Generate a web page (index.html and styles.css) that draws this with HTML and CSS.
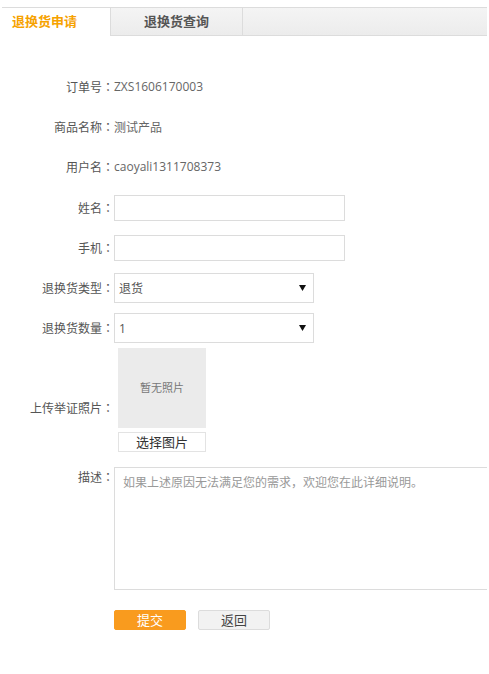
FILE: index.html
```html
<!DOCTYPE html>
<html lang="zh">
<head>
    <meta charset="UTF-8">
    <meta name="viewport" content="width=device-width, initial-scale=1.0">
    <title>退换货申请</title>
    <link rel="stylesheet" href="styles.css">
</head>
<body>
    <div class="page">
        <div class="tabs">
            <div class="tab tab-active">退换货申请</div>
            <div class="tab tab-normal">退换货查询</div>
            <div class="tab-rest"></div>
        </div>

        <div class="form">
            <div class="row row-text">
                <label>订单号<i class="colon">：</i></label>
                <span class="value">ZXS1606170003</span>
            </div>
            <div class="row row-text">
                <label>商品名称<i class="colon">：</i></label>
                <span class="value">测试产品</span>
            </div>
            <div class="row row-text">
                <label>用户名<i class="colon">：</i></label>
                <span class="value">caoyali1311708373</span>
            </div>
            <div class="row">
                <label for="name">姓名<i class="colon">：</i></label>
                <input type="text" id="name" class="text-input">
            </div>
            <div class="row">
                <label for="phone">手机<i class="colon">：</i></label>
                <input type="text" id="phone" class="text-input">
            </div>
            <div class="row">
                <label for="type">退换货类型<i class="colon">：</i></label>
                <div class="select-box">
                    <select id="type">
                        <option>退货</option>
                        <option>换货</option>
                    </select>
                    <svg class="arrow" width="7" height="6" viewBox="0 0 7 6"><path d="M0 0H7L3.5 6Z" fill="#111"/></svg>
                </div>
            </div>
            <div class="row">
                <label for="count">退换货数量<i class="colon">：</i></label>
                <div class="select-box">
                    <select id="count">
                        <option>1</option>
                    </select>
                    <svg class="arrow" width="7" height="6" viewBox="0 0 7 6"><path d="M0 0H7L3.5 6Z" fill="#111"/></svg>
                </div>
            </div>
            <div class="row row-photo">
                <label>上传举证照片<i class="colon">：</i></label>
                <div class="photo">
                    <div class="photo-empty">暂无照片</div>
                    <button class="photo-btn">选择图片</button>
                </div>
            </div>
            <div class="row row-desc">
                <label for="desc">描述<i class="colon">：</i></label>
                <textarea id="desc" placeholder="如果上述原因无法满足您的需求，欢迎您在此详细说明。"></textarea>
            </div>
            <div class="actions">
                <button class="btn btn-submit">提交</button>
                <button class="btn btn-back">返回</button>
            </div>
        </div>
    </div>
</body>
</html>
```

FILE: styles.css
```css
body {
    margin: 0;
    font-family: "Open Sans", "Noto Sans CJK SC", sans-serif;
    font-size: 12px;
    color: #555;
    background: #fff;
}
.page {
    width: 485px;
    margin: 7px 0 0 2px;
    overflow: hidden;
}
.tabs {
    display: flex;
    height: 29px;
}
.tab {
    box-sizing: border-box;
    border-top: 1px solid #dcdcdc;
    line-height: 27px;
    font-size: 13px;
    font-weight: bold;
}
.tab-active {
    width: 108px;
    padding-left: 10px;
    color: #f6a200;
    background: #fff;
}
.tab-normal {
    width: 133px;
    text-align: center;
    color: #555;
    border-left: 1px solid #dcdcdc;
    border-right: 1px solid #dcdcdc;
    border-bottom: 1px solid #dcdcdc;
    background: linear-gradient(#f4f4f4, #ececec);
}
.tab-rest {
    flex: 1;
    box-sizing: border-box;
    border-top: 1px solid #dcdcdc;
    border-bottom: 1px solid #dcdcdc;
    background: linear-gradient(#f4f4f4, #ececec);
}
.form {
    padding-top: 32px;
}
.row {
    display: flex;
    align-items: center;
    height: 40px;
}
.row-text {
    box-sizing: border-box;
    padding-bottom: 3px;
}
.row label {
    width: 112px;
    flex-shrink: 0;
    text-align: right;
    color: #555;
}
.colon {
    display: inline-block;
    width: 12px;
    text-align: center;
    font-style: normal;
    font-family: "Noto Sans CJK TC", sans-serif;
}
.value {
    color: #666;
}
.text-input {
    box-sizing: border-box;
    width: 231px;
    height: 26px;
    border: 1px solid #dcdcdc;
    padding: 0 5px;
    font: inherit;
    outline: none;
}
.select-box {
    box-sizing: border-box;
    display: flex;
    align-items: center;
    width: 200px;
    height: 30px;
    border: 1px solid #dcdcdc;
    padding-right: 7px;
}
.select-box select {
    flex: 1;
    appearance: none;
    -webkit-appearance: none;
    border: none;
    background: transparent;
    outline: none;
    height: 28px;
    padding: 0 4px;
    font-family: inherit;
    font-size: 12px;
    color: #555;
}
.row-photo {
    height: auto;
}
.row-photo label {
    margin-top: 16px;
}
.photo {
    display: flex;
    flex-direction: column;
    margin-left: 4px;
}
.photo-empty {
    width: 88px;
    height: 80px;
    background: #ebebeb;
    color: #777;
    font-size: 11px;
    line-height: 80px;
    text-align: center;
}
.photo-btn {
    box-sizing: border-box;
    width: 88px;
    height: 20px;
    margin-top: 4px;
    padding: 0;
    border: 1px solid #e3e3e3;
    background: #fff;
    font-family: inherit;
    font-size: 13px;
    line-height: 18px;
    color: #333;
}
.row-desc {
    height: auto;
    align-items: flex-start;
    margin-top: 15px;
}
.row-desc label {
    line-height: 20px;
}
.row-desc textarea {
    box-sizing: border-box;
    flex-shrink: 0;
    width: 400px;
    height: 123px;
    border: 1px solid #dcdcdc;
    padding: 5px 8px;
    font-family: "Noto Sans CJK SC", sans-serif;
    font-size: 12px;
    line-height: 18px;
    resize: none;
    outline: none;
}
.row-desc textarea::placeholder {
    color: #999;
}
.actions {
    display: flex;
    gap: 12px;
    margin: 20px 0 0 112px;
}
.btn {
    box-sizing: border-box;
    width: 72px;
    height: 20px;
    padding: 0;
    border-radius: 2px;
    font-family: inherit;
    font-size: 13px;
    line-height: 18px;
    cursor: pointer;
}
.btn-submit {
    border: 1px solid #f99b1e;
    background: #f99b1e;
    color: #fff;
}
.btn-back {
    border: 1px solid #dcdcdc;
    background: #f2f2f2;
    color: #444;
}
```
